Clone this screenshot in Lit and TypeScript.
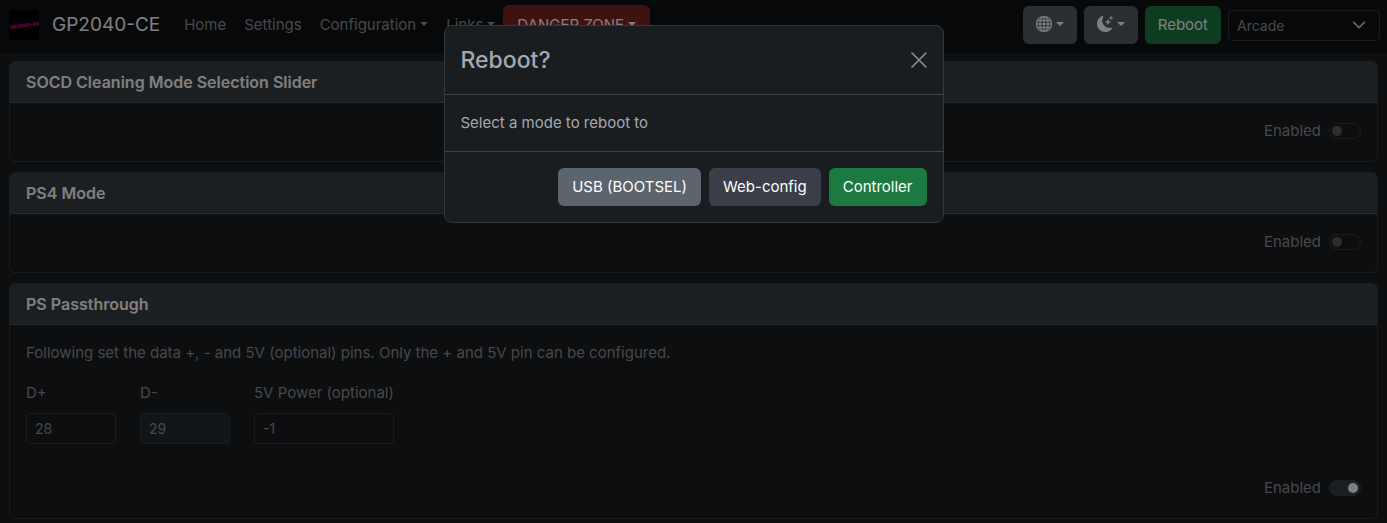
import { LitElement, html, css, svg } from "lit";
import { customElement, property, state } from "lit/decorators.js";

const globe = svg`<path stroke="currentColor" stroke-width=".3" d="M0 8a8 8 0 1 1 16 0A8 8 0 0 1 0 8m7.5-6.923c-.67.204-1.335.82-1.887 1.855A8 8 0 0 0 5.145 4H7.5zM4.09 4a9.3 9.3 0 0 1 .64-1.539 7 7 0 0 1 .597-.933A7.03 7.03 0 0 0 2.255 4zm-.582 3.5c.03-.877.138-1.718.312-2.5H1.674a7 7 0 0 0-.656 2.5zM4.847 5a12.5 12.5 0 0 0-.338 2.5H7.5V5zM8.5 5v2.5h2.99a12.5 12.5 0 0 0-.337-2.5zM4.51 8.5a12.5 12.5 0 0 0 .337 2.5H7.5V8.5zm3.99 0V11h2.653c.187-.765.306-1.608.338-2.5zM5.145 12q.208.58.468 1.068c.552 1.035 1.218 1.65 1.887 1.855V12zm.182 2.472a7 7 0 0 1-.597-.933A9.3 9.3 0 0 1 4.09 12H2.255a7 7 0 0 0 3.072 2.472M3.82 11a13.7 13.7 0 0 1-.312-2.5h-2.49c.062.89.291 1.733.656 2.5zm6.853 3.472A7 7 0 0 0 13.745 12H11.91a9.3 9.3 0 0 1-.64 1.539 7 7 0 0 1-.597.933M8.5 12v2.923c.67-.204 1.335-.82 1.887-1.855q.26-.487.468-1.068zm3.68-1h2.146c.365-.767.594-1.61.656-2.5h-2.49a13.7 13.7 0 0 1-.312 2.5m2.802-3.5a7 7 0 0 0-.656-2.5H12.18c.174.782.282 1.623.312 2.5zM11.27 2.461c.247.464.462.98.64 1.539h1.835a7 7 0 0 0-3.072-2.472c.218.284.418.598.597.933M10.855 4a8 8 0 0 0-.468-1.068C9.835 1.897 9.17 1.282 8.5 1.077V4z"/>`;

const moonStars = svg`<path d="M6 .278a.77.77 0 0 1 .08.858 7.2 7.2 0 0 0-.878 3.46c0 4.021 3.278 7.277 7.318 7.277q.792-.001 1.533-.16a.79.79 0 0 1 .81.316.73.73 0 0 1-.031.893A8.35 8.35 0 0 1 8.344 16C3.734 16 0 12.286 0 7.71 0 4.266 2.114 1.312 5.124.06A.75.75 0 0 1 6 .278"/><path d="M10.794 3.148a.217.217 0 0 1 .412 0l.387 1.162c.173.518.579.924 1.097 1.097l1.162.387a.217.217 0 0 1 0 .412l-1.162.387a1.73 1.73 0 0 0-1.097 1.097l-.387 1.162a.217.217 0 0 1-.412 0l-.387-1.162A1.73 1.73 0 0 0 9.31 6.593l-1.162-.387a.217.217 0 0 1 0-.412l1.162-.387a1.73 1.73 0 0 0 1.097-1.097zM13.863.099a.145.145 0 0 1 .274 0l.258.774c.115.346.386.617.732.732l.774.258a.145.145 0 0 1 0 .274l-.774.258a1.16 1.16 0 0 0-.732.732l-.258.774a.145.145 0 0 1-.274 0l-.258-.774a1.16 1.16 0 0 0-.732-.732l-.774-.258a.145.145 0 0 1 0-.274l.774-.258c.346-.115.617-.386.732-.732z"/>`;

@customElement("addon-card")
class AddonCard extends LitElement {
  @property() heading = "";
  @property({ type: Boolean }) enabled = false;

  static styles = css`
    :host {
      display: block;
      border: 1px solid #36393d;
      border-radius: 6px;
      overflow: hidden;
      background: #1a1c1f;
    }
    .head {
      padding: 8px 16px;
      background: #383f45;
      border-bottom: 1px solid #505356;
      color: #fff;
      font-weight: 600;
      font-size: 16px;
      line-height: 24px;
      margin: 0;
    }
    .body {
      padding: 16px 16px 18px;
    }
    .switch {
      display: flex;
      justify-content: flex-end;
      align-items: center;
      gap: 8px;
    }
    .toggle {
      appearance: none;
      box-sizing: border-box;
      width: 32px;
      height: 16px;
      margin: 0;
      padding: 2px;
      border: 1px solid #36393d;
      border-radius: 8px;
      background: transparent;
      display: flex;
      align-items: center;
    }
    .toggle::before {
      content: "";
      width: 10px;
      height: 10px;
      border-radius: 50%;
      background: #585a5d;
    }
    .toggle:checked {
      background: #383f45;
      border-color: #383f45;
      justify-content: flex-end;
    }
    .toggle:checked::before {
      background: #fff;
    }
  `;

  render() {
    return html`
      <h2 class="head">${this.heading}</h2>
      <div class="body">
        <slot></slot>
        <div class="switch">
          <label for="enabled">Enabled</label>
          <input class="toggle" id="enabled" type="checkbox" role="switch" .checked=${this.enabled} />
        </div>
      </div>
    `;
  }
}

@customElement("app-root")
class AppRoot extends LitElement {
  @state() private showReboot = true;

  private close = () => {
    this.showReboot = false;
  };

  private open = () => {
    this.showReboot = true;
  };

  static styles = css`
    :host {
      display: block;
      min-height: 100vh;
      box-sizing: border-box;
      background: #1a1c1f;
      color: #8e9196;
      font-family: Inter, "Liberation Sans", sans-serif;
      font-size: 15px;
      line-height: 24px;
    }
    .nav {
      display: flex;
      align-items: center;
      background: #0e1013;
      padding: 5px 7px 8px 9px;
    }
    .brand {
      display: flex;
      align-items: center;
      gap: 13px;
      margin-right: 24px;
      color: #fff;
      font-size: 19px;
      text-decoration: none;
    }
    .logo {
      display: block;
      width: 30px;
      height: 30px;
    }
    .menu {
      display: flex;
      align-items: center;
      gap: 8px;
      flex: 1;
    }
    .links {
      display: flex;
      align-items: center;
      gap: 18px;
    }
    .link {
      color: #8e9196;
      text-decoration: none;
      white-space: nowrap;
    }
    .drop::after {
      content: "";
      display: inline-block;
      margin-left: 4px;
      vertical-align: 4px;
      border-top: 4px solid;
      border-left: 4px solid transparent;
      border-right: 4px solid transparent;
    }
    .btn {
      height: 38px;
      padding: 0 14px;
      border: 0;
      border-radius: 6px;
      color: #fff;
      font: inherit;
      white-space: nowrap;
    }
    .danger {
      height: 40px;
      background: #7a2520;
    }
    .secondary {
      background: #5c646d;
    }
    .tools .btn {
      padding: 0 13px;
    }
    .tools .secondary {
      background: #565e65;
    }
    .dark {
      background: #3b3e46;
    }
    .success {
      background: #1c7942;
    }
    .icon {
      width: 16px;
      height: 16px;
      vertical-align: -2px;
      fill: currentColor;
    }
    .tools {
      display: flex;
      align-items: center;
      gap: 7px;
    }
    .select-wrap {
      display: grid;
      align-items: center;
      width: 152px;
    }
    .select-wrap > * {
      grid-area: 1 / 1;
    }
    .chevron {
      justify-self: end;
      margin-right: 14px;
      width: 14px;
      height: 14px;
      pointer-events: none;
      fill: none;
      stroke: #c4c7cb;
      stroke-width: 2;
      stroke-linecap: round;
      stroke-linejoin: round;
    }
    .field {
      box-sizing: border-box;
      width: 100%;
      height: 31px;
      padding: 4px 8px;
      border: 1px solid #36393d;
      border-radius: 4px;
      appearance: none;
      background: transparent;
      color: #8e9196;
      font: inherit;
      font-size: 14px;
      line-height: 21px;
    }
    .field:disabled {
      background: #242a2f;
      opacity: 1;
    }
    .cards {
      display: flex;
      flex-direction: column;
      gap: 10px;
      padding: 8px 9px 4px;
    }
    .note {
      margin: 0 0 16px;
    }
    .pins {
      display: flex;
      gap: 24px;
      margin-bottom: 32px;
    }
    .pin {
      display: grid;
      gap: 8px;
      min-width: 90px;
    }
    .pin .field {
      width: 0;
      min-width: 100%;
    }
    .backdrop {
      position: fixed;
      inset: 0;
      background: rgba(0, 0, 0, 0.5);
      padding: 25px 16px 0;
    }
    .modal {
      position: static;
      box-sizing: border-box;
      width: 100%;
      max-width: 500px;
      margin: 0 auto;
      padding: 0;
      border: 1px solid #34373b;
      border-radius: 8px;
      background: #1a1d20;
      color: #a3a9b2;
    }
    .modal-head {
      display: flex;
      align-items: center;
      justify-content: space-between;
      padding: 16px;
      border-bottom: 1px solid #404448;
    }
    .title {
      margin: 0;
      font-size: 23px;
      line-height: 36px;
      font-weight: 500;
    }
    .close {
      display: block;
      padding: 0;
      border: 0;
      background: none;
      color: #8c8e90;
    }
    .close svg {
      display: block;
      width: 16px;
      height: 16px;
      fill: none;
      stroke: currentColor;
      stroke-width: 1.6;
      stroke-linecap: round;
    }
    .modal-body {
      margin: 0;
      padding: 16px;
      border-bottom: 1px solid #404448;
    }
    .modal-foot {
      display: flex;
      justify-content: flex-end;
      gap: 8px;
      padding: 16px;
    }
  `;

  render() {
    return html`
      <nav class="nav">
        <a class="brand" href="#">
          <svg class="logo" viewBox="0 0 30 30" aria-hidden="true">
            <rect width="30" height="30" fill="#000" />
            <text x="1" y="19" transform="rotate(-7 1 19)" font-family="Inter, sans-serif" font-size="5" font-style="italic" font-weight="800" fill="#c8007c" stroke="#c8007c" stroke-width=".3">GP2040-CE</text>
          </svg>
          GP2040-CE
        </a>
        <div class="menu">
          <div class="links">
            <a class="link" href="#home">Home</a>
            <a class="link" href="#settings">Settings</a>
            <a class="link drop" href="#configuration">Configuration</a>
            <a class="link drop" href="#links">Links</a>
          </div>
          <button class="btn danger drop" type="button">DANGER ZONE</button>
        </div>
        <div class="tools">
          <button class="btn secondary drop" type="button" aria-label="Language"><svg class="icon" viewBox="0 0 16 16">${globe}</svg></button>
          <button class="btn secondary drop" type="button" aria-label="Color mode"><svg class="icon" viewBox="0 0 16 16">${moonStars}</svg></button>
          <button class="btn success" type="button" @click=${this.open}>Reboot</button>
          <div class="select-wrap">
            <select class="field" aria-label="Button labels">
              <option>Arcade</option>
            </select>
            <svg class="chevron" viewBox="0 0 16 16"><path d="m2 5 6 6 6-6" /></svg>
          </div>
        </div>
      </nav>

      <main class="cards">
        <addon-card heading="SOCD Cleaning Mode Selection Slider"></addon-card>
        <addon-card heading="PS4 Mode"></addon-card>
        <addon-card heading="PS Passthrough" enabled>
          <p class="note">Following set the data +, - and 5V (optional) pins. Only the + and 5V pin can be configured.</p>
          <div class="pins">
            <div class="pin">
              <label for="dplus">D+</label>
              <input class="field" id="dplus" value="28" />
            </div>
            <div class="pin">
              <label for="dminus">D-</label>
              <input class="field" id="dminus" value="29" disabled />
            </div>
            <div class="pin">
              <label for="power">5V Power (optional)</label>
              <input class="field" id="power" value="-1" />
            </div>
          </div>
        </addon-card>
      </main>

      ${this.showReboot
        ? html`<div class="backdrop">
            <dialog class="modal" open aria-labelledby="reboot-title">
              <header class="modal-head">
                <h1 class="title" id="reboot-title">Reboot?</h1>
                <button class="close" type="button" aria-label="Close" @click=${this.close}>
                  <svg viewBox="0 0 16 16"><path d="M1 1 15 15M15 1 1 15" /></svg>
                </button>
              </header>
              <p class="modal-body">Select a mode to reboot to</p>
              <footer class="modal-foot">
                <button class="btn secondary" type="button">USB (BOOTSEL)</button>
                <button class="btn dark" type="button">Web-config</button>
                <button class="btn success" type="button">Controller</button>
              </footer>
            </dialog>
          </div>`
        : null}
    `;
  }
}
